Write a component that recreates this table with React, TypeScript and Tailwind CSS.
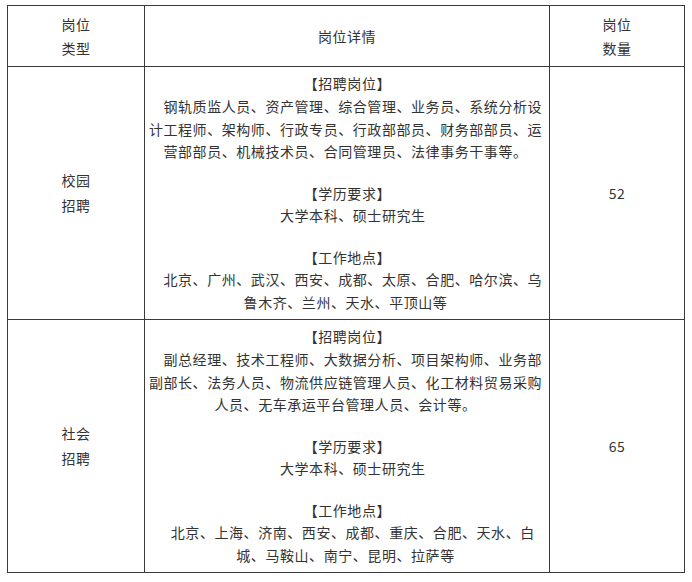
import React from "react";

const S = "\u3000";

type Section = { title: string; lines: string[] };

const row1: Section[] = [
  {
    title: "\u00a0【招聘岗位】",
    lines: [
      S + "钢轨质监人员、资产管理、综合管理、业务员、系统分析设",
      "计工程师、架构师、行政专员、行政部部员、财务部部员、运",
      "营部部员、机械技术员、合同管理员、法律事务干事等。",
    ],
  },
  { title: "\u00a0【学历要求】", lines: [S + "大学本科、硕士研究生"] },
  {
    title: "\u00a0【工作地点】",
    lines: [
      S + "北京、广州、武汉、西安、成都、太原、合肥、哈尔滨、乌",
      "鲁木齐、兰州、天水、平顶山等",
    ],
  },
];

const row2: Section[] = [
  {
    title: "\u00a0【招聘岗位】",
    lines: [
      S + "副总经理、技术工程师、大数据分析、项目架构师、业务部",
      "副部长、法务人员、物流供应链管理人员、化工材料贸易采购",
      "人员、无车承运平台管理人员、会计等。",
    ],
  },
  { title: "\u00a0【学历要求】", lines: [S + "大学本科、硕士研究生"] },
  {
    title: "\u00a0【工作地点】",
    lines: [
      S + "北京、上海、济南、西安、成都、重庆、合肥、天水、白",
      "城、马鞍山、南宁、昆明、拉萨等",
    ],
  },
];

function Details({ sections }: { sections: Section[] }) {
  return (
    <div className="flex flex-col gap-[18.5px] py-[6px] pr-[3px] text-center leading-[22.7px]">
      {sections.map((s, i) => (
        <div key={i} className="flex flex-col">
          <div className="whitespace-pre">{s.title}</div>
          {s.lines.map((l, j) => (
            <div key={j} className="whitespace-pre">
              {l}
            </div>
          ))}
        </div>
      ))}
    </div>
  );
}

export default function App() {
  return (
    <div
      className="bg-white w-[692px] h-[582px] pt-[5px] pl-[7px] text-[14px] tracking-[0.56px] text-[#333333]"
      style={{ fontFamily: '"Noto Sans CJK SC", "Noto Sans", sans-serif' }}
    >
      <div className="w-[678px] border border-[#3a3a3a] grid grid-cols-[137px_405px_134px]">
        {/* header */}
        <div className="h-[61px] border-r border-b border-[#3a3a3a] flex flex-col items-center justify-center leading-[24px]">
          <div>岗位</div>
          <div>类型</div>
        </div>
        <div className="h-[61px] border-r border-b border-[#3a3a3a] flex items-center justify-center leading-[24px]">
          <div>岗位详情</div>
        </div>
        <div className="h-[61px] border-b border-[#3a3a3a] flex flex-col items-center justify-center leading-[24px]">
          <div>岗位</div>
          <div>数量</div>
        </div>

        {/* row 1 */}
        <div className="h-[253px] border-r border-b border-[#3a3a3a] flex flex-col items-center justify-center leading-[25px]">
          <div>校园</div>
          <div>招聘</div>
        </div>
        <div className="h-[253px] border-r border-b border-[#3a3a3a] flex flex-col justify-center">
          <Details sections={row1} />
        </div>
        <div className="h-[253px] border-b border-[#3a3a3a] flex items-center justify-center">
          <div>52</div>
        </div>

        {/* row 2 */}
        <div className="h-[252px] border-r border-[#3a3a3a] flex flex-col items-center justify-center leading-[25px]">
          <div>社会</div>
          <div>招聘</div>
        </div>
        <div className="h-[252px] border-r border-[#3a3a3a] flex flex-col justify-center">
          <Details sections={row2} />
        </div>
        <div className="h-[252px] flex items-center justify-center">
          <div>65</div>
        </div>
      </div>
    </div>
  );
}
